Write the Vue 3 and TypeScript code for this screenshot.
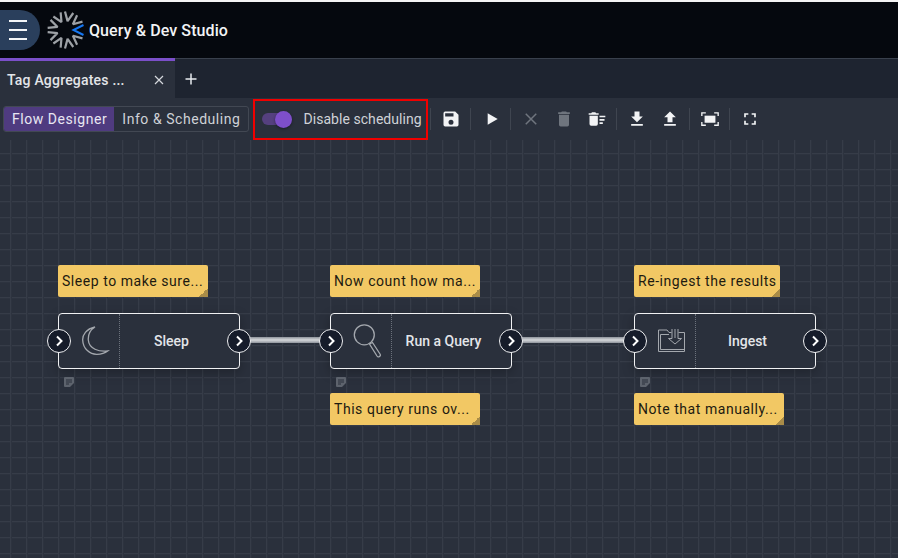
<script setup lang="ts">
type Step = {
  name: string
  x: number
  note: string
  noteWidth: number
  icon: 'moon' | 'search' | 'ingest'
  sub?: string
}

const steps: Step[] = [
  { name: 'Sleep', x: 58, note: 'Sleep to make sure...', noteWidth: 150, icon: 'moon' },
  { name: 'Run a Query', x: 330, note: 'Now count how ma...', noteWidth: 150, sub: 'This query runs ov...', icon: 'search' },
  { name: 'Ingest', x: 634, note: 'Re-ingest the results', noteWidth: 146, sub: 'Note that manually...', icon: 'ingest' },
]

const links = [
  { x: 250, w: 70 },
  { x: 522, w: 102 },
]

// logo spokes, the blue one sits at 0deg
const spokes = [40, 80, 120, 160, 200, 240, 280, 320]
</script>

<template>
  <div class="app">
    <header class="topbar">
      <button class="menu-btn" aria-label="menu">
        <span /><span /><span />
      </button>
      <svg class="logo" width="38" height="38" viewBox="-19 -19 38 38">
        <path v-for="a in spokes" :key="a" :transform="`rotate(${a})`" d="M18 -4.2 L9 0 L18 4.2" fill="none" stroke="#9da1a6" stroke-width="2.2" stroke-linejoin="bevel" />
        <path d="M17.5 -5 L7.5 0 L17.5 5" fill="none" stroke="#1677f2" stroke-width="2" />
      </svg>
      <span class="brand">Query &amp; Dev Studio</span>
    </header>

    <nav class="tabs">
      <div class="tab">
        <span class="tab-name">Tag Aggregates ...</span>
        <svg class="tab-close" width="10" height="10" viewBox="0 0 10 10"><path d="M1 1 L9 9 M9 1 L1 9" stroke="#d5d8dd" stroke-width="1.2" /></svg>
      </div>
      <svg class="tab-add" width="12" height="12" viewBox="0 0 12 12"><path d="M6 0.5 V11.5 M0.5 6 H11.5" stroke="#e8eaee" stroke-width="1.5" /></svg>
    </nav>

    <div class="toolbar">
      <div class="switcher">
        <span class="seg active">Flow Designer</span>
        <span class="seg">Info &amp; Scheduling</span>
      </div>
      <div class="sched">
        <span class="toggle"><span class="knob" /></span>
        <span class="sched-label">Disable scheduling</span>
      </div>
      <div class="tools">
        <i class="sep" />
        <span class="btn"><svg viewBox="0 0 24 24"><path d="M17 3H5a2 2 0 0 0-2 2v14a2 2 0 0 0 2 2h14a2 2 0 0 0 2-2V7l-4-4zm-5 16a3 3 0 1 1 0-6 3 3 0 0 1 0 6zm3-10H5V5h10v4z" fill="#f2f3f5" /></svg></span>
        <i class="sep" />
        <span class="btn"><svg viewBox="0 0 24 24"><path d="M8 5v14l12-7z" fill="#f2f3f5" /></svg></span>
        <i class="sep" />
        <span class="btn"><svg class="small" viewBox="0 0 24 24"><path d="M5 5 L19 19 M19 5 L5 19" stroke="#6f757e" stroke-width="2" fill="none" /></svg></span>
        <span class="btn"><svg viewBox="0 0 24 24"><path d="M6 19a2 2 0 0 0 2 2h8a2 2 0 0 0 2-2V7H6v12zM19 4h-3.5l-1-1h-5l-1 1H5v2h14V4z" fill="#6f757e" /></svg></span>
        <span class="btn"><svg viewBox="0 0 24 24"><path d="M15 16h4v2h-4zm0-8h7v2h-7zm0 4h6v2h-6zM3 18a2 2 0 0 0 2 2h6a2 2 0 0 0 2-2V8H3v10zM14 5h-3l-1-1H6L5 5H2v2h12V5z" fill="#f2f3f5" /></svg></span>
        <i class="sep" />
        <span class="btn"><svg viewBox="0 0 24 24"><path d="M19 9h-4V3H9v6H5l7 7 7-7zM5 18v2h14v-2H5z" fill="#f2f3f5" /></svg></span>
        <span class="btn"><svg viewBox="0 0 24 24"><path d="M9 16h6v-6h4l-7-7-7 7h4v6zM5 18h14v2H5v-2z" fill="#f2f3f5" /></svg></span>
        <i class="sep" />
        <span class="btn"><svg viewBox="0 0 24 24"><path d="M5.5 8h13v8.5h-13z" fill="#f2f3f5" /><path d="M7 4.7H2.2V8.5M17 4.7h4.8V8.5M7 19.5H2.2V15.7M17 19.5h4.8V15.7" fill="none" stroke="#f2f3f5" stroke-width="1.6" /></svg></span>
        <i class="sep" />
        <span class="btn"><svg viewBox="0 0 24 24"><path d="M7 14H5v5h5v-2H7v-3zm-2-4h2V7h3V5H5v5zm12 7h-3v2h5v-5h-2v3zM14 5v2h3v3h2V5h-5z" fill="#f2f3f5" /></svg></span>
      </div>
    </div>

    <main class="canvas">
      <div v-for="l in links" :key="l.x" class="link" :style="{ left: l.x + 'px', width: l.w + 'px' }" />
      <template v-for="s in steps" :key="s.name">
        <div class="note" :style="{ left: s.x + 'px', top: '125px', width: s.noteWidth + 'px' }">{{ s.note }}<i class="fold" /></div>
        <div class="node" :style="{ left: s.x + 'px' }">
          <div class="node-icon">
            <svg v-if="s.icon === 'moon'" width="30" height="32" viewBox="0 0 30 32">
              <path d="M15 2 C6 4 2.5 10 2.7 15 C3 24 10 29.5 17 29.3 C21 29.2 25 28 27.7 26 C19 27 9 24 8.3 15 C8 10 10 5 15 2 Z" fill="none" stroke="#a4a8ae" stroke-width="1.3" />
            </svg>
            <svg v-else-if="s.icon === 'search'" width="30" height="34" viewBox="0 0 30 34">
              <circle cx="12.3" cy="10.8" r="10" fill="none" stroke="#a4a8ae" stroke-width="1.3" />
              <path d="M17.5 20 L20.5 18.5 L28 30 A1.8 1.8 0 0 1 25 32 Z" fill="none" stroke="#a4a8ae" stroke-width="1.3" />
            </svg>
            <svg v-else width="27" height="24" viewBox="0 0 27 24">
              <path d="M13.5 3.5 H11 L9 1 H0.5 V22.5 H26.5 V3.5 H20.5 M2.5 20.5 V5.5 H11 M2.5 20.5 H26" fill="none" stroke="#a4a8ae" stroke-width="1" />
              <path d="M14 0 V9.5 H10.5 L17 15 L23.5 9.5 H20 V0 M17 0 V9" fill="none" stroke="#a4a8ae" stroke-width="1" />
            </svg>
          </div>
          <div class="node-name">{{ s.name }}</div>
          <span class="port in"><svg width="12" height="12" viewBox="0 0 12 12"><path d="M4 1.5 L8.5 6 L4 10.5" fill="none" stroke="#fff" stroke-width="2" /></svg></span>
          <span class="port out"><svg width="12" height="12" viewBox="0 0 12 12"><path d="M4 1.5 L8.5 6 L4 10.5" fill="none" stroke="#fff" stroke-width="2" /></svg></span>
        </div>
        <svg class="note-mark" :style="{ left: s.x + 6 + 'px' }" width="10" height="10" viewBox="0 0 10 10">
          <path d="M1 0 H9 A1 1 0 0 1 10 1 V6 L6 10 H1 A1 1 0 0 1 0 9 V1 A1 1 0 0 1 1 0 Z" fill="#5d636d" />
          <path d="M2 3 H8 M2 5 H8 M2 7 H5" stroke="#2a303c" stroke-width="1" />
        </svg>
        <div v-if="s.sub" class="note" :style="{ left: s.x + 'px', top: '253px', width: '150px' }">{{ s.sub }}<i class="fold" /></div>
      </template>
    </main>
  </div>
</template>

<style>
html, body { margin: 0; background: #2a303c; }
</style>

<style scoped>
.app {
  width: 898px;
  height: 558px;
  overflow: hidden;
  display: flex;
  flex-direction: column;
  font-family: Roboto, "Liberation Sans", sans-serif;
  background: #2a303c;
  color: #e8eaee;
  border-top: 2px solid #f4f4f4;
  box-sizing: border-box;
}
.topbar {
  height: 56px;
  flex: none;
  display: flex;
  align-items: center;
  background: #05080e;
}
.menu-btn {
  width: 40px;
  height: 40px;
  padding: 0 0 0 9px;
  border: 0;
  border-radius: 0 20px 20px 0;
  background: #2a3f5c;
  display: flex;
  flex-direction: column;
  justify-content: center;
  gap: 7px;
  flex: none;
}
.menu-btn span { display: block; width: 18px; height: 2px; background: #f4f6f8; }
.logo { margin-left: 7px; flex: none; }
.brand { margin-left: 4px; font-size: 16px; font-weight: 500; letter-spacing: 0.1px; color: #f2f3f5; }

.tabs {
  height: 40px;
  flex: none;
  display: flex;
  align-items: center;
  background: #1e2430;
  border-top: 1px solid #39404c;
  box-sizing: border-box;
}
.tab {
  width: 175px;
  height: 40px;
  margin-top: -1px;
  flex: none;
  box-sizing: border-box;
  border-top: 3px solid #7b4fc9;
  background: #2a303c;
  display: flex;
  align-items: center;
  padding: 0 5px 0 7px;
}
.tab-name { flex: 1; font-size: 14px; font-weight: 500; letter-spacing: 0.2px; color: #e3e5e9; }
.tab-close { margin-right: 6px; }
.tab-add { margin-left: 10px; }

.toolbar {
  height: 42px;
  flex: none;
  display: flex;
  align-items: center;
  background: #2a303c;
  padding-left: 3px;
}
.switcher {
  display: flex;
  height: 26px;
  box-sizing: border-box;
  border: 1px solid #424853;
  border-radius: 3px;
  font-size: 14px;
  letter-spacing: 0.55px;
  overflow: hidden;
}
.seg { padding: 0 8px; line-height: 24px; color: #cfd2d7; white-space: nowrap; }
.seg.active { background: #4f3b80; color: #e8e6f2; padding: 0 7px 0 8px; }
.sched {
  margin-left: 4px;
  width: 175px;
  height: 41px;
  flex: none;
  box-sizing: border-box;
  border: 2px solid #f00000;
  display: flex;
  align-items: center;
  padding-left: 7px;
}
.toggle {
  position: relative;
  width: 30px;
  height: 12px;
  border-radius: 6px;
  background: #55407f;
  flex: none;
}
.knob {
  position: absolute;
  right: 0;
  top: -2.5px;
  width: 17px;
  height: 17px;
  border-radius: 50%;
  background: #7e4fca;
  box-shadow: 0 1px 3px rgba(0, 0, 0, 0.4);
}
.sched-label { margin-left: 11px; font-size: 14px; color: #cfd2d7; letter-spacing: 0.05px; white-space: nowrap; }
.tools { display: flex; align-items: center; margin-left: 2px; }
.sep { width: 1px; height: 22px; margin: 0 3px; background: #3f4550; flex: none; }
.tools > .sep:first-child { margin-left: 0; }
.btn { width: 33px; height: 24px; display: flex; align-items: center; justify-content: center; flex: none; }
.btn svg { width: 20px; height: 20px; }
.btn svg.small { width: 18px; height: 18px; }

.canvas {
  position: relative;
  flex: 1;
  background-color: #2a303c;
  background-image:
    linear-gradient(to right, #363c48 1px, #2d333f 1px, #2d333f 2px, transparent 2px),
    linear-gradient(to bottom, #363c48 1px, #2d333f 1px, #2d333f 2px, transparent 2px);
  background-size: 16px 16px;
  background-position: 10px 13px;
}
.note {
  position: absolute;
  height: 32px;
  box-sizing: border-box;
  padding: 0 4px;
  line-height: 32px;
  border-radius: 2px;
  background: #f2c864;
  color: #1d1a10;
  font-size: 14px;
  letter-spacing: 0.55px;
  white-space: nowrap;
}
.fold {
  position: absolute;
  right: 0;
  bottom: 0;
  width: 9px;
  height: 9px;
  background: linear-gradient(135deg, transparent 50%, #a98c48 50%);
}
.node {
  position: absolute;
  top: 173px;
  width: 182px;
  height: 56px;
  box-sizing: border-box;
  display: flex;
  border: 1px solid #f0f1f3;
  border-radius: 4px;
  background: #2a303c;
  box-shadow: 0 4px 12px rgba(0, 0, 0, 0.25);
}
.node-icon {
  width: 61px;
  flex: none;
  box-sizing: border-box;
  padding-left: 12px;
  border-right: 1px dotted #6c727c;
  display: flex;
  align-items: center;
  justify-content: center;
}
.node-name {
  flex: 1;
  display: flex;
  align-items: center;
  justify-content: center;
  padding-right: 16px;
  font-size: 14px;
  font-weight: 500;
  color: #e3e5e9;
}
.port {
  position: absolute;
  top: 15px;
  width: 24px;
  height: 24px;
  box-sizing: border-box;
  border: 1px solid #f0f1f3;
  border-radius: 50%;
  background: #161c2a;
  display: flex;
  align-items: center;
  justify-content: center;
}
.port.in { left: -12px; }
.port.out { right: -12px; }
.link {
  position: absolute;
  top: 197px;
  height: 6px;
  background: linear-gradient(to bottom, #8d929a, #c9ccd0 40%, #c9ccd0 60%, #8d929a);
}
.note-mark { position: absolute; top: 237px; }
</style>
